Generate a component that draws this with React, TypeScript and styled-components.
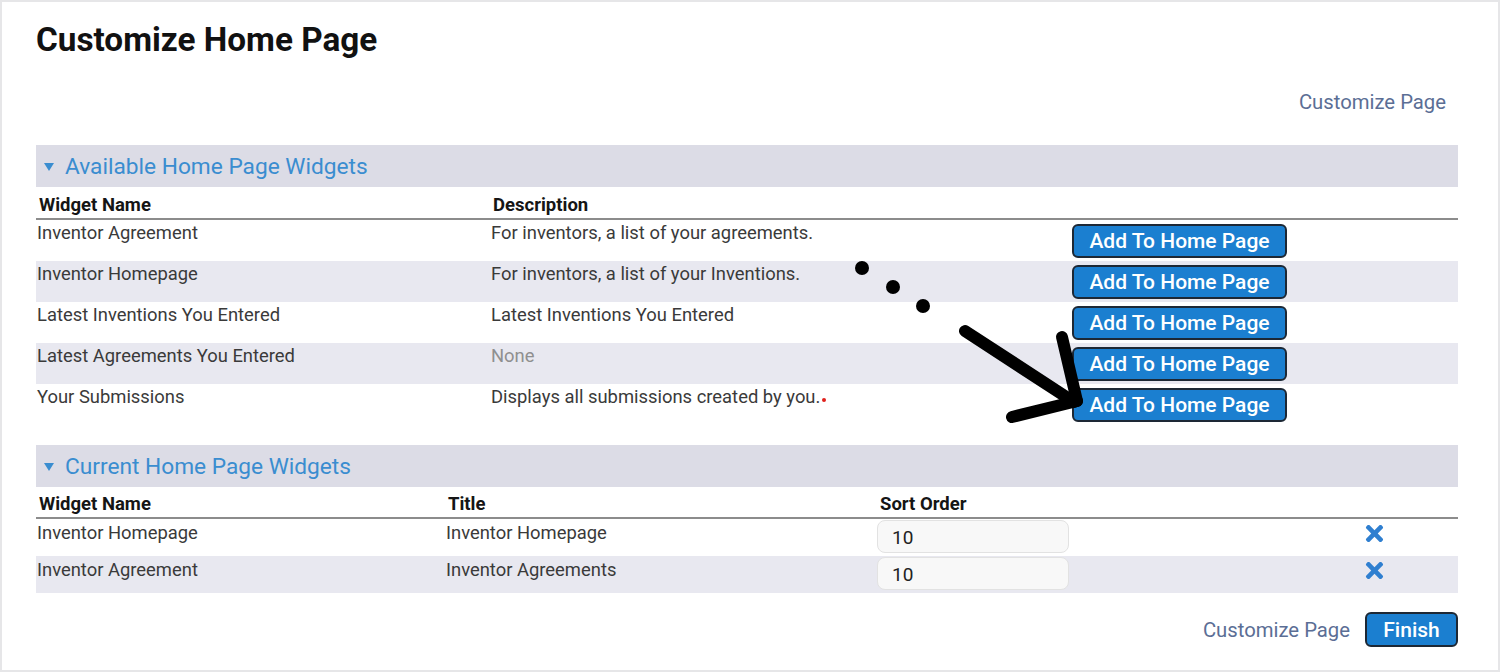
import React from "react";
import styled, { createGlobalStyle } from "styled-components";
import { FaTimes } from "react-icons/fa";

const GlobalStyle = createGlobalStyle`
  body {
    margin: 0;
    font-family: Roboto, "Liberation Sans", sans-serif;
    background: #ffffff;
  }
`;

const Frame = styled.div`
  position: relative;
  width: 1500px;
  height: 672px;
  box-sizing: border-box;
  border: 2px solid #e6e6e8;
  padding: 0 40px 0 34px;
  background: #ffffff;
`;

const Title = styled.h1`
  margin: 18px 0 0 0;
  font-size: 33.3px;
  line-height: 40px;
  font-weight: 700;
  color: #111111;
`;

const LinkRow = styled.div`
  display: flex;
  justify-content: flex-end;
  align-items: center;
  gap: 15px;
  margin-top: ${(p: { $top: number }) => p.$top}px;
  padding-right: ${(p: { $top: number; $right?: number }) => p.$right ?? 0}px;
`;

const PageLink = styled.a`
  font-size: 20.3px;
  line-height: 24px;
  color: #5b6e95;
  text-decoration: none;
`;

const Section = styled.section`
  margin-top: ${(p: { $top: number }) => p.$top}px;
`;

const Band = styled.div`
  height: 42px;
  box-sizing: border-box;
  padding: 1px 0 0 8px;
  display: flex;
  align-items: center;
  background: #dcdce6;
  color: #3a8dd0;
  font-size: 22.7px;
`;

const Caret = styled.span`
  width: 0;
  height: 0;
  border-left: 5px solid transparent;
  border-right: 5px solid transparent;
  border-top: 8px solid #3a8dd0;
  margin: 1px 11px 0 0;
`;

const Grid = styled.div`
  display: grid;
  grid-template-columns: ${(p: { $cols: string }) => p.$cols};
`;

const HeadRow = styled(Grid)`
  height: ${(p: { $cols: string; $h: number }) => p.$h}px;
  box-sizing: border-box;
  border-bottom: 2px solid #8c8c8c;
  align-items: end;
  padding-bottom: 2px;
`;

const HeadCell = styled.div`
  font-size: 18.5px;
  line-height: 22px;
  font-weight: 700;
  color: #151515;
  padding-left: 3px;
`;

const Row = styled(Grid)`
  height: ${(p: { $cols: string; $h: number; $alt: boolean }) => p.$h}px;
  background: ${(p: { $alt: boolean }) => (p.$alt ? "#e8e8f0" : "#ffffff")};
`;

const Cell = styled.div`
  font-size: 18.4px;
  line-height: 21px;
  color: ${(p: { $muted?: boolean }) => (p.$muted ? "#8f8f8f" : "#3a3a3a")};
  padding: ${(p: { $muted?: boolean; $pt?: number }) => p.$pt ?? 2}px 0 0 1px;
`;

const ActionCell = styled.div`
  display: flex;
  align-items: center;
`;

const BlueButton = styled.button`
  height: ${(p: { $w: number; $h: number }) => p.$h}px;
  width: ${(p: { $w: number }) => p.$w}px;
  box-sizing: border-box;
  border: 2px solid #1d2835;
  border-radius: 6px;
  background: #1b7fd0;
  color: #ffffff;
  font-family: Roboto, "Liberation Sans", sans-serif;
  font-size: 21px;
  font-weight: 500;
  padding: 0;
  cursor: pointer;
`;

const RedDot = styled.span`
  display: inline-block;
  width: 4px;
  height: 4px;
  border-radius: 50%;
  background: #e0201c;
  margin-left: 2px;
  vertical-align: 1px;
`;

const SortInput = styled.input`
  width: 192px;
  height: 33px;
  box-sizing: border-box;
  margin-top: 1px;
  border: 1px solid #e2e2e2;
  border-radius: 8px;
  background: #f8f8f8;
  padding: 2px 0 0 14px;
  font-family: Roboto, "Liberation Sans", sans-serif;
  font-size: 19px;
  color: #222222;
`;

const RemoveCell = styled.div`
  display: flex;
  justify-content: center;
  padding-top: 2px;
  color: #2f7fd0;
`;

const Overlay = styled.svg`
  position: absolute;
  top: -2px;
  left: -2px;
  pointer-events: none;
`;

const availableCols = "454px 582px 1fr";
const currentCols = "409px 432px 413px 1fr";

const available = [
  { name: "Inventor Agreement", desc: "For inventors, a list of your agreements." },
  { name: "Inventor Homepage", desc: "For inventors, a list of your Inventions." },
  { name: "Latest Inventions You Entered", desc: "Latest Inventions You Entered" },
  { name: "Latest Agreements You Entered", desc: "None", muted: true },
  { name: "Your Submissions", desc: "Displays all submissions created by you.", dot: true },
];

const current = [
  { name: "Inventor Homepage", title: "Inventor Homepage", order: "10" },
  { name: "Inventor Agreement", title: "Inventor Agreements", order: "10" },
];

const App = () => (
  <>
    <GlobalStyle />
    <Frame>
      <Title>Customize Home Page</Title>
      <LinkRow $top={30} $right={12}>
        <PageLink href="#">Customize Page</PageLink>
      </LinkRow>

      <Section $top={31}>
        <Band>
          <Caret />
          Available Home Page Widgets
        </Band>
        <HeadRow $cols={availableCols} $h={33}>
          <HeadCell>Widget Name</HeadCell>
          <HeadCell>Description</HeadCell>
          <div />
        </HeadRow>
        {available.map((w, i) => (
          <Row key={w.name} $cols={availableCols} $h={41} $alt={i % 2 === 1}>
            <Cell>{w.name}</Cell>
            <Cell $muted={w.muted}>
              {w.desc}
              {w.dot && <RedDot />}
            </Cell>
            <ActionCell>
              <BlueButton $w={215} $h={34}>Add To Home Page</BlueButton>
            </ActionCell>
          </Row>
        ))}
      </Section>

      <Section $top={20}>
        <Band>
          <Caret />
          Current Home Page Widgets
        </Band>
        <HeadRow $cols={currentCols} $h={32}>
          <HeadCell>Widget Name</HeadCell>
          <HeadCell>Title</HeadCell>
          <HeadCell>Sort Order</HeadCell>
          <div />
        </HeadRow>
        {current.map((w, i) => (
          <Row key={w.name} $cols={currentCols} $h={37} $alt={i % 2 === 1}>
            <Cell $pt={3}>{w.name}</Cell>
            <Cell $pt={3}>{w.title}</Cell>
            <div>
              <SortInput defaultValue={w.order} />
            </div>
            <RemoveCell>
              <FaTimes size={25} />
            </RemoveCell>
          </Row>
        ))}
      </Section>

      <LinkRow $top={19}>
        <PageLink href="#">Customize Page</PageLink>
        <BlueButton $w={93} $h={35}>Finish</BlueButton>
      </LinkRow>

      <Overlay width="1500" height="672" viewBox="0 0 1500 672">
        <circle cx="862" cy="268" r="7" fill="#000" />
        <circle cx="893" cy="287" r="7" fill="#000" />
        <circle cx="923" cy="306" r="7" fill="#000" />
        <g stroke="#000" strokeWidth="12" strokeLinecap="round" fill="none">
          <line x1="965" y1="331" x2="1074" y2="402" />
          <line x1="1062" y1="337" x2="1077" y2="401" />
          <line x1="1012" y1="417" x2="1077" y2="401" />
        </g>
      </Overlay>
    </Frame>
  </>
);

export default App;
